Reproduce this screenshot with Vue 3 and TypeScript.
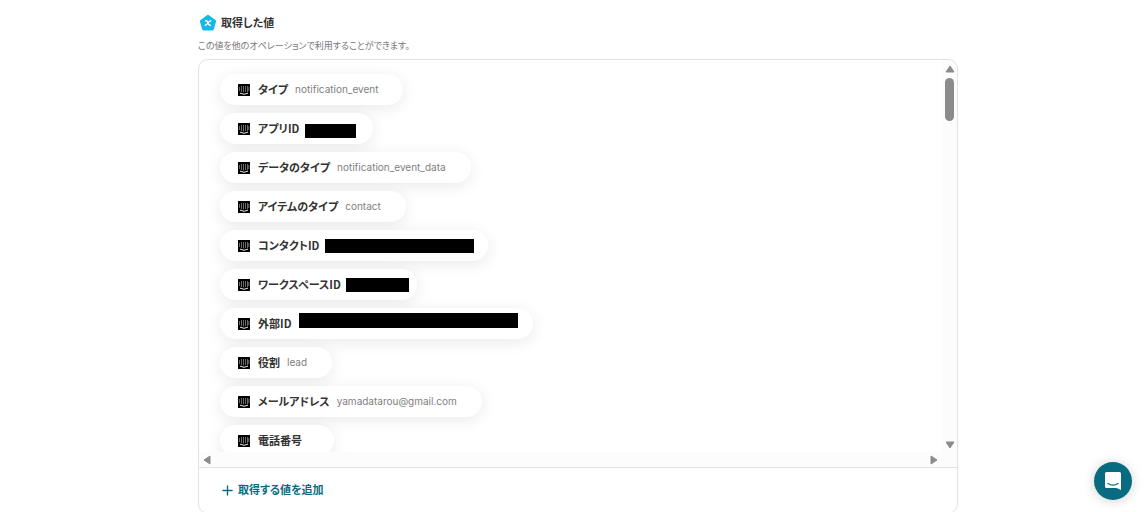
<script setup lang="ts">
interface Mask {
  left: number
  top: number
  width: number
  height: number
}

interface Field {
  label: string
  value?: string
  pillWidth?: number
  mask?: Mask
}

const fields: Field[] = [
  { label: 'タイプ', value: 'notification_event' },
  { label: 'アプリID', pillWidth: 153, mask: { left: 85, top: 11, width: 51, height: 14 } },
  { label: 'データのタイプ', value: 'notification_event_data' },
  { label: 'アイテムのタイプ', value: 'contact' },
  { label: 'コンタクトID', pillWidth: 268, mask: { left: 105, top: 9, width: 149, height: 14 } },
  { label: 'ワークスペースID', pillWidth: 197, mask: { left: 126, top: 9, width: 63, height: 14 } },
  { label: '外部ID', pillWidth: 313, mask: { left: 79, top: 5, width: 219, height: 15 } },
  { label: '役割', value: 'lead' },
  { label: 'メールアドレス', value: 'yamadatarou@gmail.com' },
  { label: '電話番号', value: '' },
]

const px = (n?: number) => (n === undefined ? undefined : `${n}px`)
</script>

<template>
  <main class="page">
    <header class="heading">
      <svg class="badge" viewBox="0 0 18 18" aria-hidden="true">
        <path d="M9 2.600 15.400 7.300 13.200 14.800H4.800L2.600 7.300Z" fill="#13b9ea" stroke="#13b9ea" stroke-width="3.400" stroke-linejoin="round" />
        <path d="M6.600 6.800c1.900-.4 2 .8 2.400 2.200.4 1.500.9 2.600 2.500 2.200M11.800 6.800C9.700 6.800 8.300 11.200 6.200 11.300" fill="none" stroke="#fff" stroke-width="1.400" stroke-linecap="round" />
      </svg>
      <h1>取得した値</h1>
    </header>
    <p class="note">この値を他のオペレーションで利用することができます。</p>

    <section class="panel">
      <div class="viewport">
        <ul class="list">
          <li v-for="field in fields" :key="field.label" class="pill" :style="{ width: px(field.pillWidth) }">
            <svg class="icon" viewBox="0 0 12 12" aria-hidden="true">
              <rect width="12" height="12" fill="#000" />
              <path d="M1.500 3v4M3.500 2v6M5.500 2v6.500M7.500 2v6M9.500 2v6M10.800 3v4" stroke="#a4a4a4" stroke-width=".65" />
              <path d="M2 9.100q4 2.400 8 0" fill="none" stroke="#fff" stroke-width=".9" />
            </svg>
            <span class="label">{{ field.label }}</span>
            <span class="value">{{ field.value }}</span>
            <span
              v-if="field.mask"
              class="mask"
              :style="{
                left: px(field.mask.left),
                top: px(field.mask.top),
                width: px(field.mask.width),
                height: px(field.mask.height),
              }"
            ></span>
          </li>
        </ul>
        <div class="track vertical" aria-hidden="true">
          <svg class="arrow" viewBox="0 0 10 8"><path d="M5 1 9 7H1Z" /></svg>
          <span class="thumb"></span>
          <svg class="arrow end" viewBox="0 0 10 8"><path d="M1 1H9L5 7Z" /></svg>
        </div>
        <div class="track horizontal" aria-hidden="true">
          <svg class="arrow side" viewBox="0 0 8 10"><path d="M7 1V9L1 5Z" /></svg>
          <svg class="arrow side" viewBox="0 0 8 10"><path d="M1 1V9L7 5Z" /></svg>
        </div>
        <div class="corner"></div>
      </div>
      <footer class="footer">
        <button type="button" class="add">
          <svg class="plus" viewBox="0 0 12 12" aria-hidden="true">
            <path d="M6 1v10M1 6h10" stroke="currentColor" stroke-width="1.500" stroke-linecap="round" />
          </svg>
          <span class="add-text">取得する値を追加</span>
        </button>
      </footer>
    </section>

    <button type="button" class="chat" aria-label="チャットを開く">
      <svg viewBox="0 0 18 20" aria-hidden="true">
        <path d="M2.500 1h13Q17 1 17 2.500V19l-4.500-2h-10Q1 17 1 15.500v-13Q1 1 2.500 1Z" fill="#fff" />
        <path d="M4 12.500q5 3.400 10 0" fill="none" stroke="#086b80" stroke-width="1.300" stroke-linecap="round" />
      </svg>
    </button>
  </main>
</template>

<style>
body {
  margin: 0;
  background: #fff;
}
</style>

<style scoped>
.page {
  box-sizing: border-box;
  height: 100vh;
  overflow: hidden;
  padding: 14px 186px 0 198px;
  color: #333;
  font-family: "Noto Sans CJK JP", sans-serif;
  font-feature-settings: "palt";
}

.heading {
  display: flex;
  align-items: center;
  gap: 4px;
  height: 18px;
  padding-left: 1px;
}

.badge {
  width: 18px;
  height: 18px;
}

h1 {
  margin: 0;
  padding-bottom: 2px;
  font-size: 11px;
  line-height: 16px;
  font-weight: 700;
}

.note {
  margin: 7px 0;
  font-size: 9px;
  line-height: 13px;
  color: #777;
}

.panel {
  overflow: hidden;
  border: 1px solid #e2e2e2;
  border-radius: 10px;
}

.viewport {
  display: grid;
  grid-template-columns: minmax(0, 1fr) 15px;
  grid-template-rows: 392px 15px;
}

.list {
  display: flex;
  flex-direction: column;
  align-items: flex-start;
  gap: 8px;
  margin: 0;
  padding: 14px 21px;
  overflow: hidden;
  list-style: none;
}

.pill {
  position: relative;
  display: flex;
  flex: none;
  align-items: center;
  box-sizing: border-box;
  height: 31px;
  padding: 0 25px 0 18px;
  border-radius: 16px;
  background: #fff;
  box-shadow: 0 3px 16px rgba(0, 0, 0, 0.09);
  white-space: nowrap;
}

.icon {
  width: 12px;
  height: 12px;
  margin-right: 8px;
}

.label {
  margin-right: 7px;
  padding-bottom: 2px;
  font-size: 11px;
  line-height: 16px;
  font-weight: 700;
}

.value {
  padding-bottom: 2px;
  font-family: Inter, sans-serif;
  font-size: 10px;
  line-height: 16px;
  color: #808080;
}

.mask {
  position: absolute;
  background: #000;
}

.track {
  display: flex;
  align-items: center;
  background: #fcfcfc;
}

.vertical {
  flex-direction: column;
  padding: 5px 0 3px;
}

.horizontal {
  justify-content: space-between;
  padding: 0 4px;
}

.corner {
  background: #fcfcfc;
}

.arrow {
  width: 10px;
  height: 8px;
  fill: #8b8b8b;
  stroke: #8b8b8b;
  stroke-linejoin: round;
}

.side {
  width: 8px;
  height: 10px;
}

.end {
  margin-top: auto;
}

.thumb {
  width: 9px;
  height: 43px;
  margin-top: 5px;
  border-radius: 5px;
  background: #8b8b8b;
}

.footer {
  padding: 12px 23px 13px;
  border-top: 1px solid #e2e2e2;
}

.add {
  display: flex;
  align-items: center;
  gap: 5px;
  padding: 0;
  border: 0;
  background: none;
  color: #086b80;
  font: 700 11px/18px "Noto Sans CJK JP", sans-serif;
  font-feature-settings: "palt";
}

.add-text {
  padding-bottom: 2px;
}

.plus {
  width: 11px;
  height: 11px;
}

.chat {
  position: fixed;
  right: 12px;
  bottom: 12px;
  display: flex;
  align-items: center;
  justify-content: center;
  width: 38px;
  height: 38px;
  padding: 0;
  border: 0;
  border-radius: 50%;
  background: #086b80;
  box-shadow: 0 1px 12px rgba(0, 0, 0, 0.18);
}

.chat svg {
  width: 18px;
  height: 20px;
}
</style>
